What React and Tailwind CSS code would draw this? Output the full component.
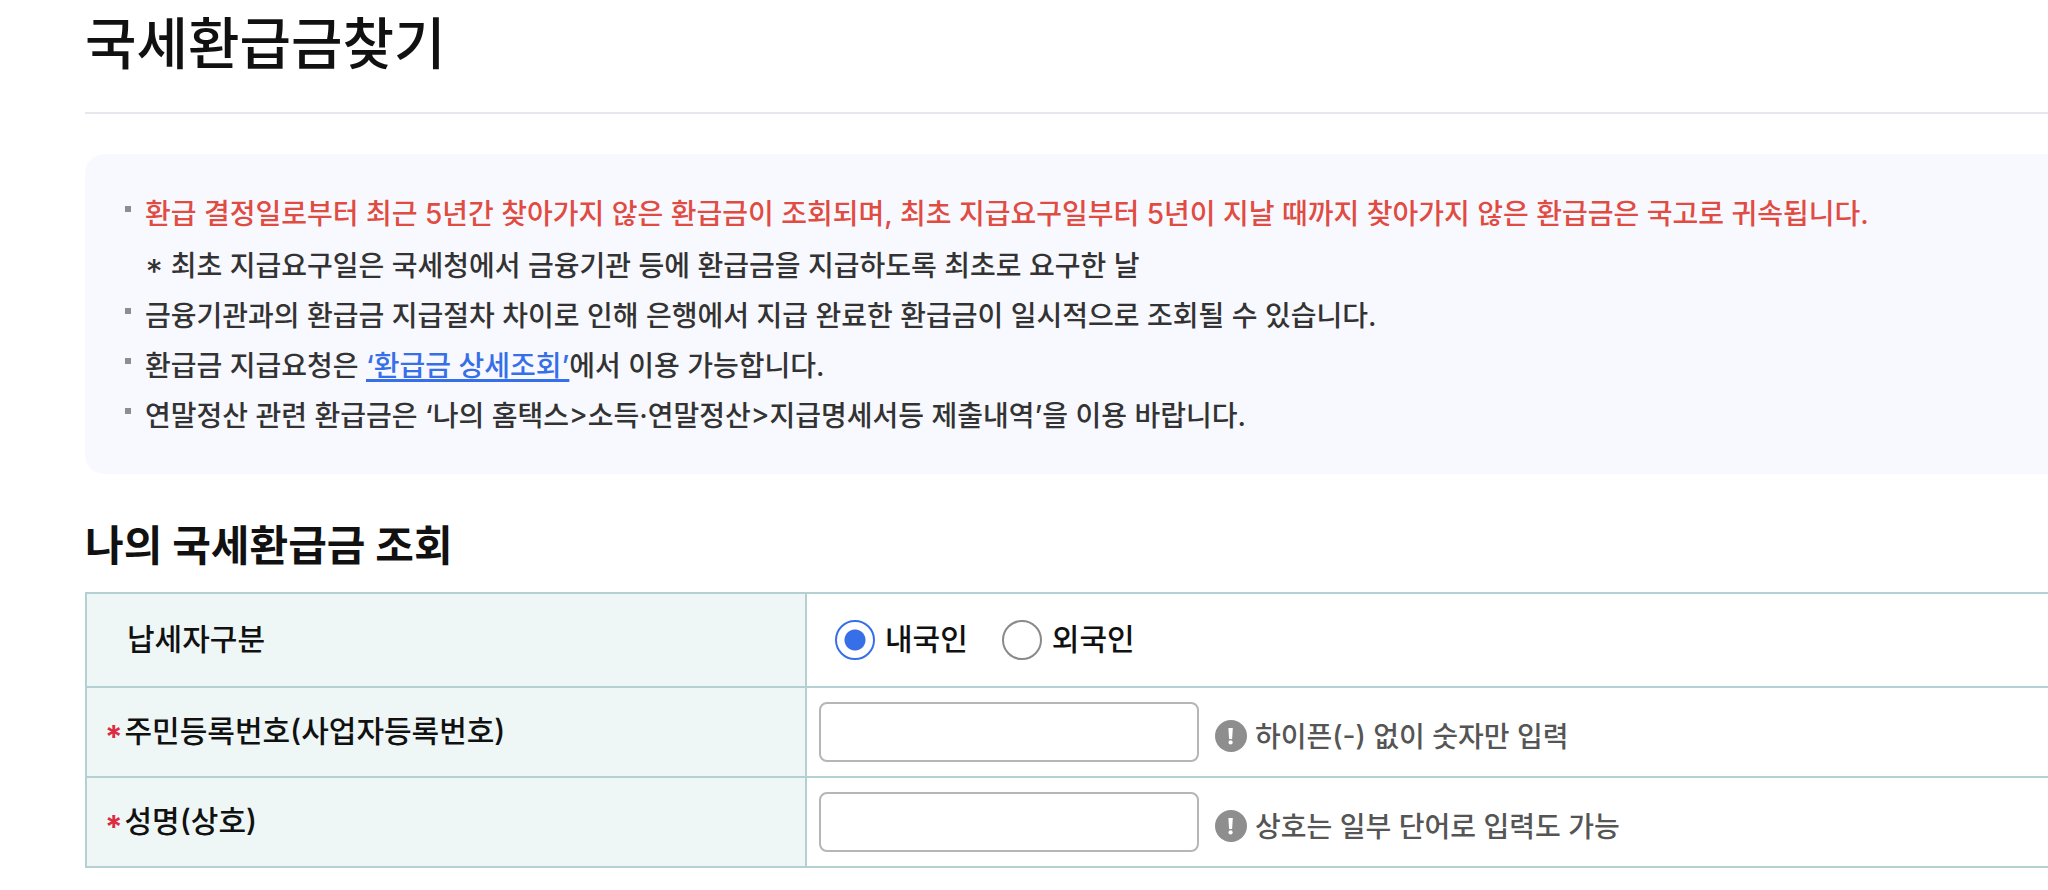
import { useState } from "react";

function Notice({ children }) {
  return (
    <li className="flex items-start gap-[14px]">
      <span aria-hidden="true" className="mt-[17px] size-[6px] shrink-0 bg-[#8e8e8e]" />
      <span>{children}</span>
    </li>
  );
}

function TaxpayerOption({ label, value, current, onSelect }) {
  return (
    <label className="flex items-center gap-[10px]">
      <input
        type="radio"
        name="taxpayer"
        value={value}
        checked={current === value}
        onChange={() => onSelect(value)}
        className="size-10 shrink-0 appearance-none rounded-full border-2 border-[#8a8a8a] bg-white checked:border-[#376fe8] checked:bg-[radial-gradient(circle,#376fe8_10px,#ffffff_11px)]"
      />
      <span className="pb-[2px]">{label}</span>
    </label>
  );
}

function Field({ id, label, hint }) {
  return (
    <tr>
      <th scope="row" className="border-2 border-[#b5d0d3] bg-[#eef7f6] pb-[2px] pl-[18px] text-left font-medium">
        <label htmlFor={id} className="flex items-center gap-[2px]">
          <span className="pt-[2px] text-[26px] font-bold text-[#dc2c44]">*</span>
          <span>{label}</span>
        </label>
      </th>
      <td className="h-[90px] border-2 border-r-0 border-[#b5d0d3] px-3">
        <div className="flex items-center gap-4">
          <input
            id={id}
            type="text"
            aria-describedby={`${id}-hint`}
            className="h-[60px] w-[380px] rounded-lg border-2 border-[#b6b6b6] bg-white px-4"
          />
          <p id={`${id}-hint`} className="flex items-center gap-2 pt-2 text-[28px] leading-9 text-[#555555]">
            <svg viewBox="0 0 32 32" className="size-8 shrink-0" aria-hidden="true">
              <circle cx="16" cy="16" r="16" fill="#8e8e8e" />
              <path d="M13.4 8h4.4l-.7 11h-3z" fill="#fff" />
              <circle cx="15.6" cy="22.4" r="2.1" fill="#fff" />
            </svg>
            <span className="pt-[2px]">{hint}</span>
          </p>
        </div>
      </td>
    </tr>
  );
}

export default function App() {
  const [taxpayer, setTaxpayer] = useState("domestic");
  return (
    <main className="overflow-hidden bg-white pl-[85px] font-['Inter','Noto_Sans_CJK_KR',sans-serif] font-medium text-[#111111] [font-feature-settings:'case'_1]">
      <h1 className="border-b-2 border-[#e6e6ec] pt-2 pb-[32px] text-[56px] leading-[72px] font-medium">
        국세환급금찾기
      </h1>

      <section className="mt-10 rounded-l-[20px] bg-[#f8f9ff] px-10 pt-[35px] pb-[33px] text-[28px] leading-[50px] text-[#333333]">
        <ul>
          <Notice>
            <span className="text-[#e04b42]">
              환급 결정일로부터 최근 5년간 찾아가지 않은 환급금이 조회되며, 최초 지급요구일부터 5년이 지날 때까지 찾아가지 않은 환급금은 국고로 귀속됩니다.
            </span>
            <p className="mt-[2px]">* 최초 지급요구일은 국세청에서 금융기관 등에 환급금을 지급하도록 최초로 요구한 날</p>
          </Notice>
          <Notice>금융기관과의 환급금 지급절차 차이로 인해 은행에서 지급 완료한 환급금이 일시적으로 조회될 수 있습니다.</Notice>
          <Notice>
            환급금 지급요청은{" "}
            <a href="#refund-detail" className="text-[#376fe8] underline decoration-[3px] underline-offset-[3px] [text-decoration-skip-ink:none]">
              ‘환급금 상세조회’
            </a>
            에서 이용 가능합니다.
          </Notice>
          <Notice>연말정산 관련 환급금은 ‘나의 홈택스&gt;소득·연말정산&gt;지급명세서등 제출내역’을 이용 바랍니다.</Notice>
        </ul>
      </section>

      <h2 className="mt-[41px] text-[42px] leading-[62px] font-bold">나의 국세환급금 조회</h2>

      <table className="mt-[15px] w-full table-fixed border-collapse text-[30px] leading-10">
        <colgroup>
          <col className="w-[720px]" />
          <col />
        </colgroup>
        <tbody>
          <tr>
            <th scope="row" className="h-[94px] border-2 border-[#b5d0d3] bg-[#eef7f6] pb-[2px] pl-10 text-left font-medium">
              납세자구분
            </th>
            <td className="border-2 border-r-0 border-[#b5d0d3] pl-7">
              <div className="flex items-center gap-[34px]" role="radiogroup" aria-label="납세자구분">
                <TaxpayerOption label="내국인" value="domestic" current={taxpayer} onSelect={setTaxpayer} />
                <TaxpayerOption label="외국인" value="foreign" current={taxpayer} onSelect={setTaxpayer} />
              </div>
            </td>
          </tr>
          <Field id="registration" label="주민등록번호(사업자등록번호)" hint="하이픈(-) 없이 숫자만 입력" />
          <Field id="name" label="성명(상호)" hint="상호는 일부 단어로 입력도 가능" />
        </tbody>
      </table>
    </main>
  );
}
